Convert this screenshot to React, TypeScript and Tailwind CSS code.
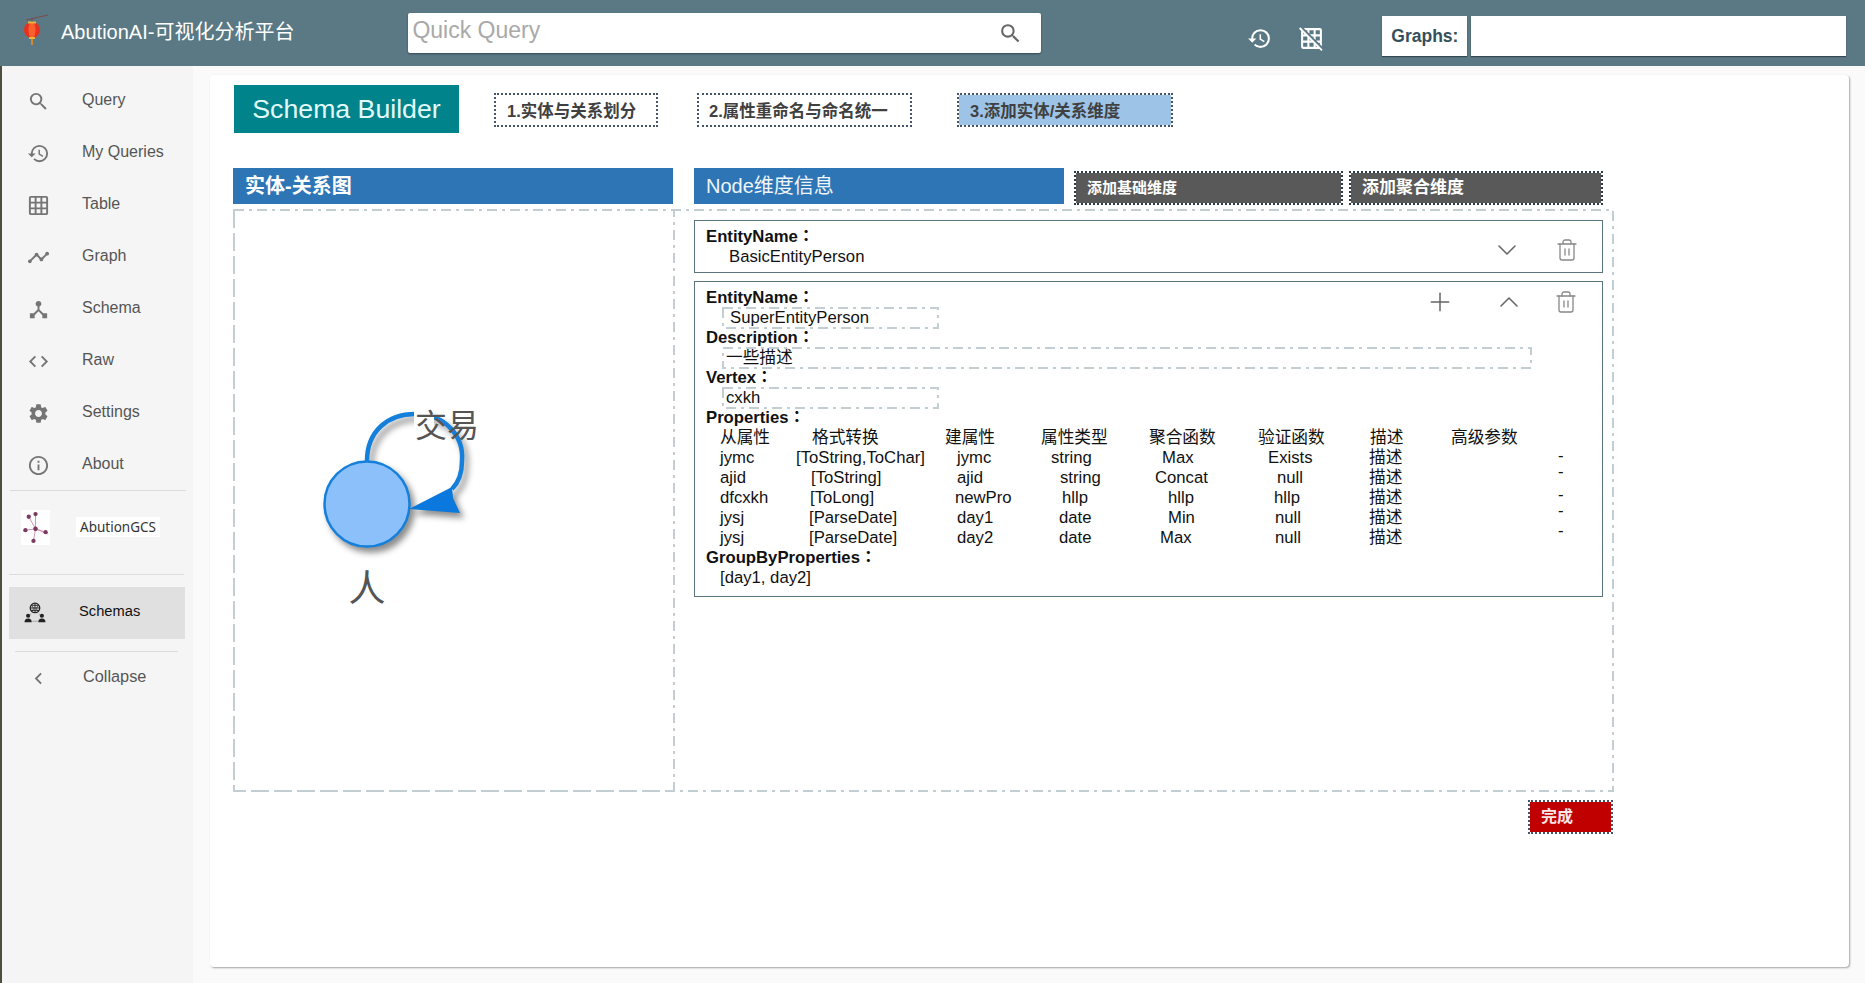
import type { ReactNode } from "react";
import { ChevronDown, ChevronUp, Plus, Trash2 } from "lucide-react";
import {
  MdChevronLeft,
  MdCode,
  MdDeviceHub,
  MdGridOff,
  MdGridOn,
  MdHistory,
  MdInfoOutline,
  MdSearch,
  MdSettings,
  MdTimeline,
} from "react-icons/md";

const navItems = [
  { label: "Query", icon: MdSearch },
  { label: "My Queries", icon: MdHistory },
  { label: "Table", icon: MdGridOn },
  { label: "Graph", icon: MdTimeline },
  { label: "Schema", icon: MdDeviceHub },
  { label: "Raw", icon: MdCode },
  { label: "Settings", icon: MdSettings },
  { label: "About", icon: MdInfoOutline },
];

// column widths of the properties table
const cols = ["w-[76px]", "w-[149px]", "w-[96px]", "w-[108px]", "w-[109px]", "w-[111px]", "w-[82px]", "w-[107px]"];

type Cell = [string, string];

const propRows: Cell[][] = [
  [["从属性", ""], ["格式转换", "pl-[16px]"], ["建属性", ""], ["属性类型", ""], ["聚合函数", ""], ["验证函数", ""], ["描述", "pl-[1px]"], ["高级参数", ""]],
  [["jymc", ""], ["[ToString,ToChar]", ""], ["jymc", "pl-[12px]"], ["string", "pl-[10px]"], ["Max", "pl-[13px]"], ["Exists", "pl-[10px]"], ["描述", ""], ["-", "pl-[107px] -translate-y-[2px]"]],
  [["ajid", ""], ["[ToString]", "pl-[15px]"], ["ajid", "pl-[12px]"], ["string", "pl-[19px]"], ["Concat", "pl-[6px]"], ["null", "pl-[19px]"], ["描述", ""], ["-", "pl-[107px] -translate-y-[6px]"]],
  [["dfcxkh", ""], ["[ToLong]", "pl-[14px]"], ["newPro", "pl-[10px]"], ["hllp", "pl-[21px]"], ["hllp", "pl-[19px]"], ["hllp", "pl-[16px]"], ["描述", ""], ["-", "pl-[107px] -translate-y-[3px]"]],
  [["jysj", ""], ["[ParseDate]", "pl-[13px]"], ["day1", "pl-[12px]"], ["date", "pl-[18px]"], ["Min", "pl-[19px]"], ["null", "pl-[17px]"], ["描述", ""], ["-", "pl-[107px] -translate-y-[7px]"]],
  [["jysj", ""], ["[ParseDate]", "pl-[13px]"], ["day2", "pl-[12px]"], ["date", "pl-[18px]"], ["Max", "pl-[11px]"], ["null", "pl-[17px]"], ["描述", ""], ["-", "pl-[107px] -translate-y-[7px]"]],
];

// dash-dot outline, CSS borders can only do plain dashes
function DashBox({ className, children }: { className: string; children?: ReactNode }) {
  return (
    <div className={`relative ${className}`}>
      <svg className="absolute inset-0 w-full h-full overflow-visible pointer-events-none">
        <rect x="0" y="0" width="100%" height="100%" fill="none" stroke="#c3ced3" strokeWidth="2" strokeDasharray="10 5 3 5" />
      </svg>
      {children}
    </div>
  );
}

function Label({ children }: { children: ReactNode }) {
  return <div className="font-bold font-['Liberation_Sans','Noto_Sans_CJK_TC',sans-serif]">{children}</div>;
}

function Lantern() {
  return (
    <svg width="30" height="32" viewBox="0 0 30 32">
      <path d="M4 6 L26 1" stroke="#7a4a4a" strokeWidth="1" fill="none" />
      <path d="M10 5 L10 9" stroke="#7a4a4a" strokeWidth="1" />
      <ellipse cx="10" cy="16" rx="8" ry="8" fill="#e8301e" />
      <ellipse cx="10" cy="16" rx="3.5" ry="8" fill="#f8602c" />
      <rect x="6" y="7.5" width="8" height="2" fill="#e9b53c" />
      <rect x="7" y="23" width="6" height="2" fill="#e9b53c" />
      <path d="M10 25 L10 31" stroke="#d8862c" strokeWidth="2" />
    </svg>
  );
}

function HubLogo() {
  const dots = [[21, 6], [11, 10], [6, 30], [18, 46], [36, 33]];
  return (
    <svg width="29" height="35" viewBox="0 0 42 52" className="bg-white">
      {dots.map(([x, y]) => (
        <line key={`${x}-${y}`} x1="21" y1="28" x2={x} y2={y} stroke="#c77aa0" strokeWidth="1.2" />
      ))}
      <line x1="21" y1="28" x2="40" y2="36" stroke="#c77aa0" strokeWidth="1" />
      {dots.map(([x, y]) => (
        <circle key={`c-${x}-${y}`} cx={x} cy={y} r="3.2" fill="#7b3a60" />
      ))}
      <circle cx="21" cy="28" r="3.4" fill="#7b3a60" />
    </svg>
  );
}

function SchemasIcon() {
  return (
    <svg width="22" height="22" viewBox="0 0 24 24" fill="#222">
      <circle cx="12" cy="6.5" r="5.2" fill="none" stroke="#222" strokeWidth="1.4" />
      <path d="M6.8 6.5 H17.2 M12 1.3 V11.7 M8 3.6 H16 M8 9.4 H16" stroke="#222" strokeWidth="1" />
      <path d="M8.5 4 Q12 8 8.5 10 M15.5 4 Q12 8 15.5 10" stroke="#222" strokeWidth="0.8" fill="none" />
      <circle cx="4.5" cy="15" r="2.3" />
      <path d="M0.6 22 Q0.6 18 4.5 18 Q8.4 18 8.4 22 Z" />
      <circle cx="19.5" cy="15" r="2.3" />
      <path d="M15.6 22 Q15.6 18 19.5 18 Q23.4 18 23.4 22 Z" />
      <path d="M8 13 L6 14 M16 13 L18 14 M9 21 H15" stroke="#888" strokeWidth="0.7" />
    </svg>
  );
}

function Sidebar() {
  return (
    <aside className="w-[193px] shrink-0 bg-[#f5f5f5] border-l-2 border-[#4d4d40] pt-[8px] text-[16px] text-[#555]">
      {navItems.map(({ label, icon: Icon }) => (
        <div key={label} className="h-[52px] flex items-center">
          <Icon size={23} className="ml-[25px] text-[#757575] translate-y-px" />
          <span className="ml-[32px]">{label}</span>
        </div>
      ))}
      <div className="h-px ml-[8px] w-[176px] bg-[#dcdcdc]" />
      <div className="h-[83px] flex items-center pb-[11px]">
        <div className="ml-[19px]"><HubLogo /></div>
        <span className="ml-[26px] bg-white px-[4px] py-[2px] text-[13.5px] text-[#333] font-['Noto_Sans',sans-serif] leading-[16px]">AbutionGCS</span>
      </div>
      <div className="h-px ml-[7px] w-[175px] bg-[#dcdcdc]" />
      <div className="mt-[12px] ml-[7px] w-[176px] h-[52px] bg-[#e0e0e0] flex items-center text-[14.7px] text-[#111]">
        <div className="ml-[15px]"><SchemasIcon /></div>
        <span className="ml-[33px] -translate-y-[2px]">Schemas</span>
      </div>
      <div className="mt-[12px] h-px ml-[13px] w-[163px] bg-[#dcdcdc]" />
      <div className="h-[52px] flex items-center text-[16.3px]">
        <MdChevronLeft size={23} className="ml-[25px] text-[#757575]" />
        <span className="ml-[33px] -translate-y-[2px]">Collapse</span>
      </div>
    </aside>
  );
}

function TopBar() {
  return (
    <header className="h-[66px] shrink-0 bg-[#5a7984] flex items-start">
      <div className="ml-[22px] mt-[14px]"><Lantern /></div>
      <span className="ml-[9px] mt-[19px] text-[20px] leading-[26px] text-white whitespace-nowrap">AbutionAI-可视化分析平台</span>
      <div className="ml-[114px] mt-[13px] w-[633px] h-[40px] bg-white rounded-[2px] shadow-[0_1px_2px_rgba(0,0,0,0.4)] flex items-center justify-between pl-[4px] pr-[18px]">
        <span className="text-[23px] text-[#a9a9a9] -translate-y-[3px]">Quick Query</span>
        <MdSearch size={25} className="text-[#666]" />
      </div>
      <MdHistory size={25} className="ml-[206px] mt-[26px] text-white" />
      <MdGridOff size={25} className="ml-[27px] mt-[26px] text-white" />
      <div className="ml-[58px] mt-[16px] w-[85px] h-[40px] bg-white flex items-center justify-center text-[17.5px] font-bold text-[#34505c] shadow-[0_1px_1px_rgba(0,0,0,0.4)]">Graphs:</div>
      <div className="ml-[4px] mt-[16px] w-[375px] h-[40px] bg-white shadow-[0_1px_1px_rgba(0,0,0,0.4)]" />
    </header>
  );
}

function ErGraph() {
  return (
    <svg viewBox="234 209 440 581" className="w-[440px] h-[581px]">
      <g className="drop-shadow-[4px_5px_3px_rgba(0,0,0,0.45)]">
        <path d="M367 460 C367 430 388 413 415 413 C445 413 464 435 462 460 C462 472 458 482 452 488" fill="none" stroke="#1580dc" strokeWidth="4.5" />
        <path d="M409 508 L452 486 L453 497 L460 512 Z" fill="#0a78dc" />
        <circle cx="367" cy="503" r="42.5" fill="#8cc0fb" stroke="#1580dc" strokeWidth="2.5" />
      </g>
      <rect x="414" y="410" width="20" height="26" fill="#fff" />
      <text x="447" y="436" textAnchor="middle" fontSize="32" fill="#555" fontFamily="'Noto Sans CJK SC', sans-serif">交易</text>
      <text x="367" y="601" textAnchor="middle" fontSize="37" fill="#555" fontFamily="'Noto Sans CJK SC', sans-serif">人</text>
    </svg>
  );
}

function StepButton({ children, className }: { children: ReactNode; className: string }) {
  return (
    <div className={`h-[34px] mt-[2px] border-2 border-dotted border-[#44546a] bg-clip-padding flex items-center text-[16.5px] font-bold text-[#404040] ${className}`}>
      <span className="translate-y-px">{children}</span>
    </div>
  );
}

function BasicEntity() {
  return (
    <div className="relative h-[53px] border border-[#5a7480] pl-[11px] pt-[6px]">
      <Label>EntityName：</Label>
      <div className="pl-[23px]">BasicEntityPerson</div>
      <ChevronDown size={32} strokeWidth={1.2} className="absolute right-[79px] top-[13px] text-[#666]" />
      <Trash2 size={24} strokeWidth={1.3} className="absolute right-[23px] top-[17px] text-[#888]" />
    </div>
  );
}

function SuperEntity() {
  return (
    <div className="relative h-[316px] mt-[8px] border border-[#5a7480] pl-[11px] pt-[6px]">
      <Label>EntityName：</Label>
      <DashBox className="ml-[17px] w-[215px] h-[20px] pl-[7px]">SuperEntityPerson</DashBox>
      <Label>Description：</Label>
      <DashBox className="ml-[17px] w-[808px] h-[20px] pl-[3px]">一些描述</DashBox>
      <Label>Vertex：</Label>
      <DashBox className="ml-[17px] w-[215px] h-[20px] pl-[3px]">cxkh</DashBox>
      <Label>Properties：</Label>
      {propRows.map((row, i) => (
        <div key={i} className="flex pl-[14px] h-[20px]">
          {row.map(([text, cls], j) => (
            <div key={j} className={`${cols[j]} shrink-0 whitespace-nowrap ${cls}`}>{text}</div>
          ))}
        </div>
      ))}
      <Label>GroupByProperties：</Label>
      <div className="pl-[14px]">[day1, day2]</div>
      <Plus size={30} strokeWidth={1.2} className="absolute right-[147px] top-[5px] text-[#666]" />
      <ChevronUp size={32} strokeWidth={1.2} className="absolute right-[77px] top-[4px] text-[#666]" />
      <Trash2 size={24} strokeWidth={1.3} className="absolute right-[24px] top-[8px] text-[#888]" />
    </div>
  );
}

export default function App() {
  return (
    <div className="w-[1865px] h-[983px] overflow-hidden flex flex-col bg-[#fafafa] font-['Liberation_Sans','Noto_Sans_CJK_SC',sans-serif]">
      <TopBar />
      <div className="flex flex-1 min-h-0">
        <Sidebar />
        <main className="flex-1 pl-[17px] pt-[9px]">
          <div className="w-[1639px] h-[892px] bg-white rounded-[4px] shadow-[1px_1px_2px_rgba(0,0,0,0.35)] pl-[23px] pt-[10px]">
            <div className="flex items-center">
              <div className="ml-px w-[225px] h-[48px] bg-[#00838a] text-[#e2fbfb] text-[26.7px] flex items-center justify-center">Schema Builder</div>
              <StepButton className="ml-[35px] w-[164px] pl-[11px]">1.实体与关系划分</StepButton>
              <StepButton className="ml-[39px] w-[215px] pl-[10px]">2.属性重命名与命名统一</StepButton>
              <StepButton className="ml-[45px] w-[216px] pl-[11px] bg-[#9dc3e6]">3.添加实体/关系维度</StepButton>
            </div>

            <div className="flex items-start mt-[35px]">
              <div className="w-[440px] h-[36px] bg-[#2e75b6] text-white text-[20px] font-bold flex items-center pl-[12px]">实体-关系图</div>
              <div className="ml-[21px] w-[370px] h-[36px] bg-[#2e75b6] text-[#eef5fb] text-[20px] flex items-center pl-[12px]">Node维度信息</div>
              <div className="ml-[10px] mt-[3px] w-[269px] h-[34px] bg-[#595959] bg-clip-padding border-2 border-dotted border-[#2c3a44] text-white text-[15px] font-bold flex items-center pl-[11px]">添加基础维度</div>
              <div className="ml-[6px] mt-[3px] w-[254px] h-[34px] bg-[#595959] bg-clip-padding border-2 border-dotted border-[#2c3a44] text-white text-[17px] font-bold flex items-center pl-[11px]">添加聚合维度</div>
            </div>

            <DashBox className="mt-[5px] ml-px w-[1379px] h-[581px] flex">
              <DashBox className="w-[440px] h-full">
                <ErGraph />
              </DashBox>
              <div className="w-[930px] pl-[20px] pt-[10px] text-[16.7px] leading-[20px] text-[#111]">
                <div className="w-[909px]">
                  <BasicEntity />
                  <SuperEntity />
                </div>
              </div>
            </DashBox>

            <div className="w-[1380px] flex justify-end mt-[9px]">
              <div className="w-[85px] h-[34px] bg-[#c00000] bg-clip-padding border-2 border-dotted border-[#44546a] text-[#fde8e8] text-[16px] font-bold flex items-center pl-[11px]">完成</div>
            </div>
          </div>
        </main>
      </div>
    </div>
  );
}
